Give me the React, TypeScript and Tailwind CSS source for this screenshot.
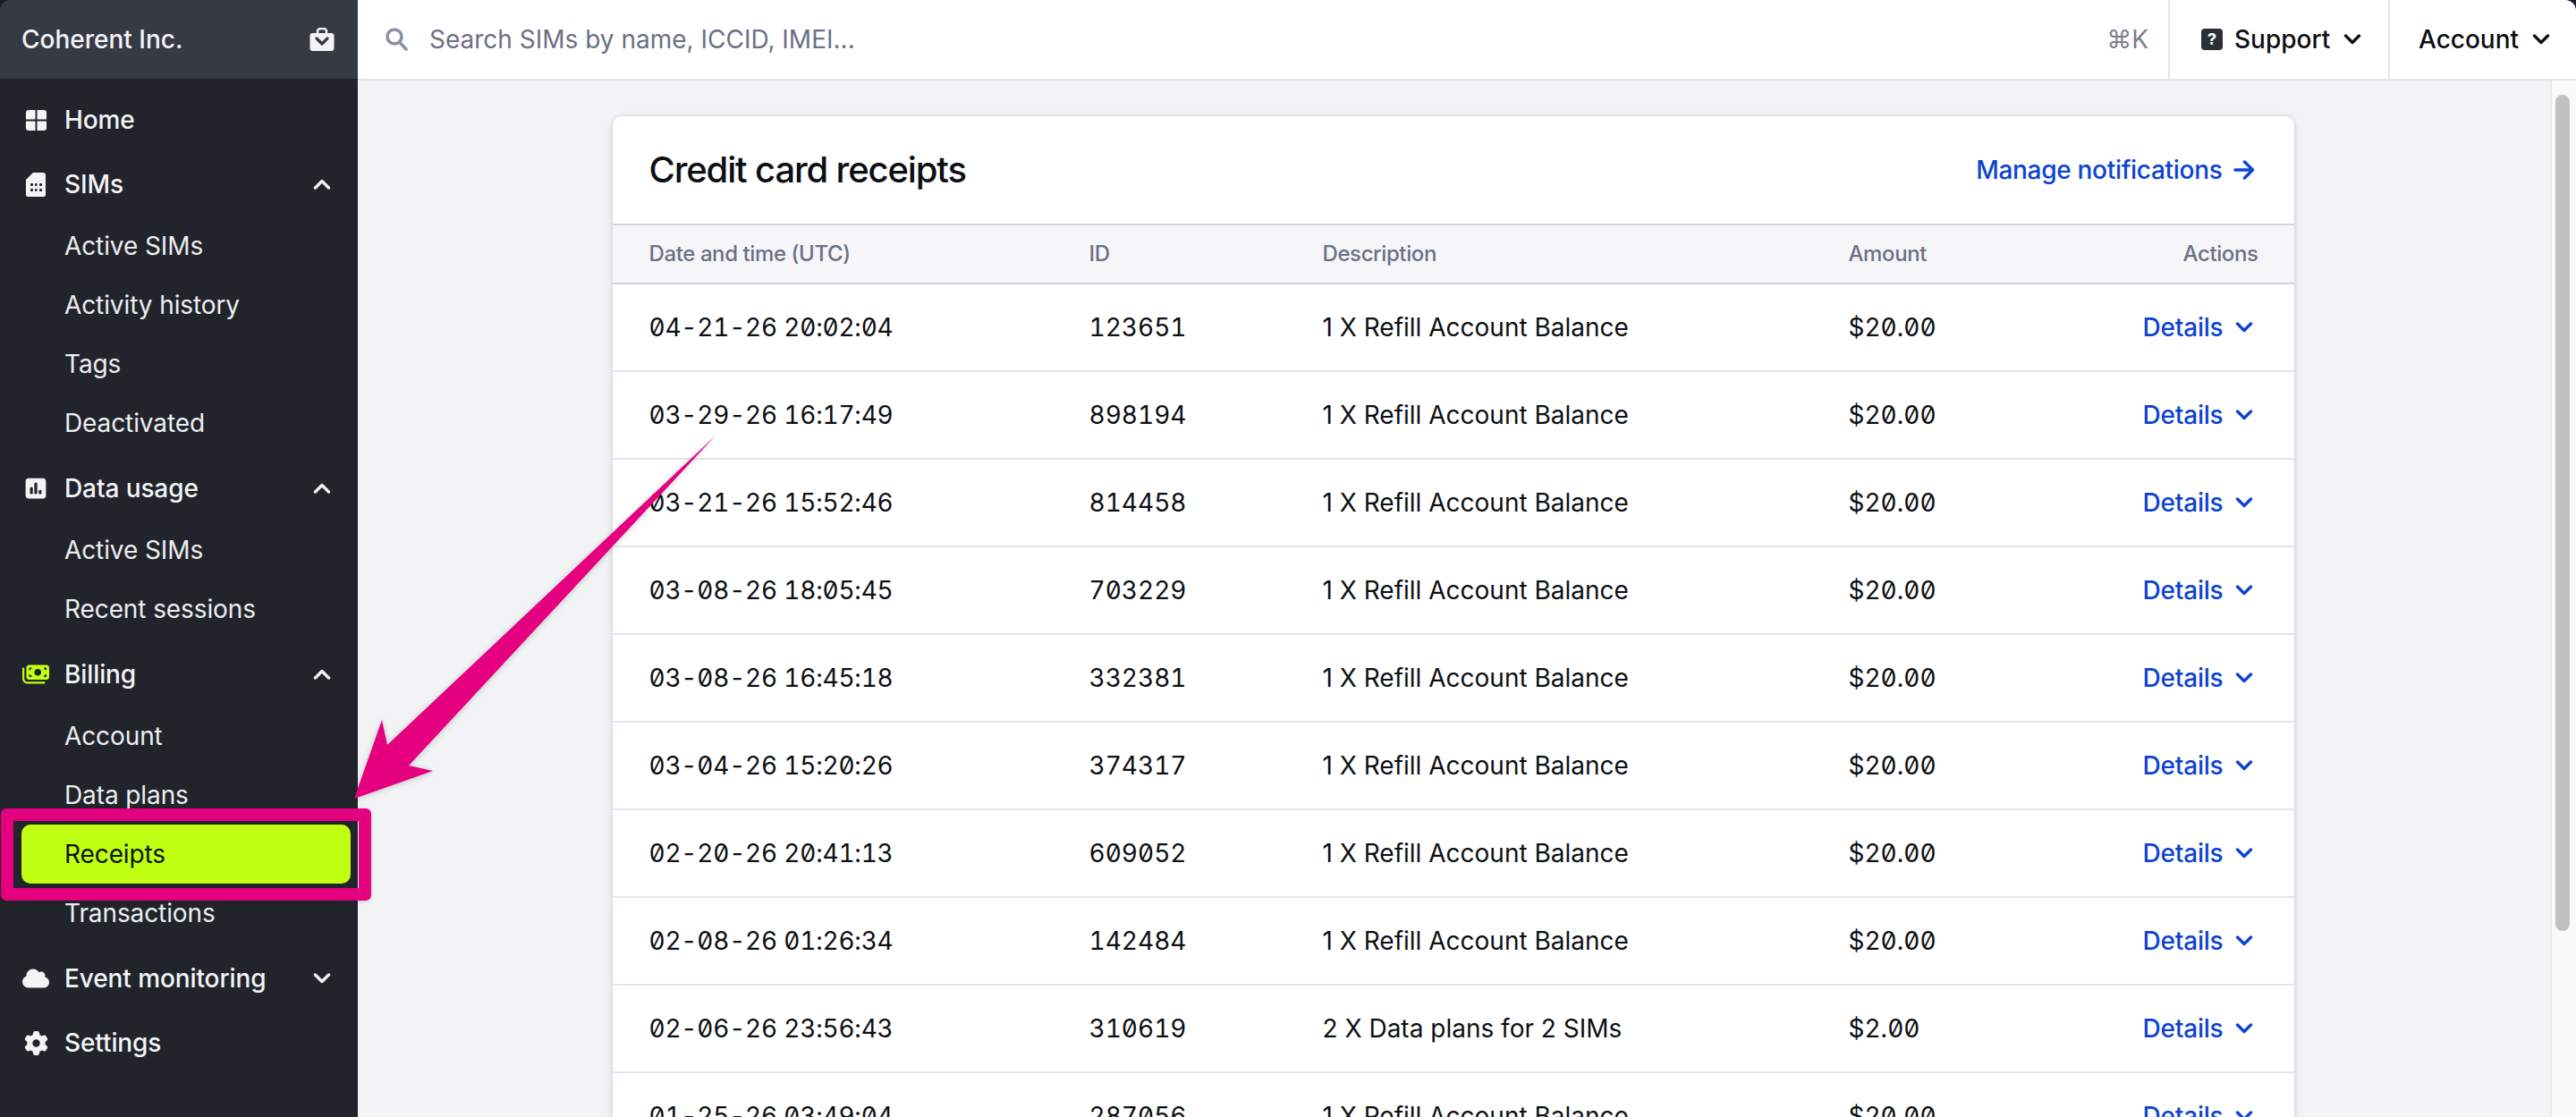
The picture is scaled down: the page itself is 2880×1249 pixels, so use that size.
import React from 'react';
import { FaCloud, FaGear, FaMoneyBills, FaSquarePollVertical } from 'react-icons/fa6';

const receipts = [
  { date: '04-21-26 20:02:04', id: '123651', desc: '1 X Refill Account Balance', amount: '$20.00' },
  { date: '03-29-26 16:17:49', id: '898194', desc: '1 X Refill Account Balance', amount: '$20.00' },
  { date: '03-21-26 15:52:46', id: '814458', desc: '1 X Refill Account Balance', amount: '$20.00' },
  { date: '03-08-26 18:05:45', id: '703229', desc: '1 X Refill Account Balance', amount: '$20.00' },
  { date: '03-08-26 16:45:18', id: '332381', desc: '1 X Refill Account Balance', amount: '$20.00' },
  { date: '03-04-26 15:20:26', id: '374317', desc: '1 X Refill Account Balance', amount: '$20.00' },
  { date: '02-20-26 20:41:13', id: '609052', desc: '1 X Refill Account Balance', amount: '$20.00' },
  { date: '02-08-26 01:26:34', id: '142484', desc: '1 X Refill Account Balance', amount: '$20.00' },
  { date: '02-06-26 23:56:43', id: '310619', desc: '2 X Data plans for 2 SIMs', amount: '$2.00' },
  { date: '01-25-26 03:49:04', id: '287056', desc: '1 X Refill Account Balance', amount: '$20.00' },
];

function Chevron({ up = false, className = '' }: { up?: boolean; className?: string }) {
  return (
    <svg viewBox="0 0 20 12" className={`w-[20px] h-[12px] ${className}`} fill="none" stroke="currentColor" strokeWidth="3.4" strokeLinecap="round" strokeLinejoin="round">
      <polyline points={up ? '2.5,10 10,2.5 17.5,10' : '2.5,2 10,9.5 17.5,2'} />
    </svg>
  );
}

function HomeIcon() {
  return (
    <svg viewBox="0 0 23 23" className="w-[23px] h-[23px]" fill="currentColor">
      <path d="M3 0h7.500v10.500H0V3a3 3 0 0 1 3-3z" />
      <path d="M12.500 0H20a3 3 0 0 1 3 3v7.500H12.500z" />
      <path d="M0 12.500h10.500V23H3a3 3 0 0 1-3-3z" />
      <path d="M12.500 12.500H23V20a3 3 0 0 1-3 3h-7.500z" />
    </svg>
  );
}

function SimIcon() {
  return (
    <svg viewBox="0 0 22 27" className="w-[22px] h-[27px]">
      <path d="M8 0h11a3 3 0 0 1 3 3v21.500a2.500 2.500 0 0 1-2.500 2.500h-17A2.500 2.500 0 0 1 0 24.500V8z" fill="#f3f4f6" />
      <g fill="#22242b">
        <rect x="5" y="12" width="3" height="3" rx="1" />
        <rect x="10" y="12" width="2.500" height="3" rx="1" />
        <rect x="15" y="12" width="3" height="3" rx="1" />
        <rect x="5" y="18" width="3" height="3" rx="1" />
        <rect x="10" y="18" width="2.500" height="3" rx="1" />
        <rect x="15" y="18" width="3" height="3" rx="1" />
      </g>
    </svg>
  );
}

function BagIcon() {
  return (
    <svg viewBox="0 0 28 26" className="w-[28px] h-[26px]">
      <path d="M9 7V4a3 3 0 0 1 3-3h4a3 3 0 0 1 3 3v3" fill="none" stroke="#f3f4f6" strokeWidth="2.500" />
      <rect x="0.500" y="6" width="27" height="20" rx="3" fill="#f3f4f6" />
      <polyline points="8,12 14,18 20,12" fill="none" stroke="#363a45" strokeWidth="3.200" strokeLinecap="round" strokeLinejoin="round" />
    </svg>
  );
}

function NavGroup({ icon, label, open, active }: { icon: React.ReactNode; label: string; open?: boolean; active?: boolean }) {
  return (
    <div className="h-[72px] flex items-center">
      <div className={`w-[72px] flex justify-center pl-[8px] ${active ? 'text-[#bfff12]' : 'text-[#f3f4f6]'}`}>{icon}</div>
      <span className="flex-1 text-[28px] font-medium text-[#f3f4f6] tracking-[-0.1px]">{label}</span>
      {open !== undefined && <Chevron up={open} className="text-[#f3f4f6] mr-[30px]" />}
    </div>
  );
}

function NavItem({ label, active }: { label: string; active?: boolean }) {
  return (
    <div className={`h-[66px] ml-[24px] mr-[8px] pl-[48px] flex items-center rounded-[10px] text-[28px] tracking-[-0.1px] ${active ? 'bg-[#bfff12] text-[#0d120e]' : 'text-[#eceef1]'}`}>
      {label}
    </div>
  );
}

function Sidebar() {
  return (
    <aside className="w-[400px] shrink-0 bg-[#22242b] flex flex-col">
      <div className="h-[88px] bg-[#363a45] flex items-center justify-between pl-[24px] pr-[26px]">
        <span className="text-[28px] font-medium text-[#f3f4f6]">Coherent Inc.</span>
        <BagIcon />
      </div>
      <nav className="pt-[10px] flex flex-col">
        <NavGroup icon={<HomeIcon />} label="Home" />
        <NavGroup icon={<SimIcon />} label="SIMs" open />
        <div className="mb-[4px]">
          <NavItem label="Active SIMs" />
          <NavItem label="Activity history" />
          <NavItem label="Tags" />
          <NavItem label="Deactivated" />
        </div>
        <NavGroup icon={<FaSquarePollVertical className="w-[24px] h-[26px]" />} label="Data usage" open />
        <div className="mb-[4px]">
          <NavItem label="Active SIMs" />
          <NavItem label="Recent sessions" />
        </div>
        <NavGroup icon={<FaMoneyBills className="w-[30px] h-[24px]" />} label="Billing" open active />
        <div className="mb-[4px]">
          <NavItem label="Account" />
          <NavItem label="Data plans" />
          <NavItem label="Receipts" active />
          <NavItem label="Transactions" />
        </div>
        <NavGroup icon={<FaCloud className="w-[30px] h-[24px]" />} label="Event monitoring" open={false} />
        <NavGroup icon={<FaGear className="w-[27px] h-[27px]" />} label="Settings" />
      </nav>
    </aside>
  );
}

function TopBar() {
  return (
    <header className="h-[90px] shrink-0 bg-white border-b-2 border-[#e4e5ea] flex items-stretch">
      <div className="flex-1 flex items-center pl-[31px] pr-[22px]">
        <svg viewBox="0 0 25 26" className="w-[25px] h-[26px] mr-[24px]" fill="none" stroke="#8b92a8" strokeWidth="3.600" strokeLinecap="round">
          <circle cx="10" cy="10" r="8" />
          <line x1="16" y1="16.500" x2="23" y2="24" />
        </svg>
        <span className="flex-1 text-[28px] text-[#6b7085]">Search SIMs by name, ICCID, IMEI...</span>
        <span className="text-[28px] text-[#7a7f8f]">⌘K</span>
      </div>
      <div className="w-[246px] border-l-2 border-[#e4e5ea] flex items-center pl-[35px] text-[#0d0f14]">
        <span className="w-[24px] h-[24px] rounded-[4px] bg-[#2b2f38] text-white text-[18px] leading-[24px] text-center font-bold mr-[13px]">?</span>
        <span className="text-[28px] font-medium mr-[15px]">Support</span>
        <Chevron />
      </div>
      <div className="w-[210px] border-l-2 border-[#e4e5ea] flex items-center pl-[32px] text-[#0d0f14]">
        <span className="text-[28px] font-medium mr-[15px]">Account</span>
        <Chevron />
      </div>
    </header>
  );
}

function ReceiptRow({ date, id, desc, amount }: { date: string; id: string; desc: string; amount: string }) {
  return (
    <div className="h-[98px] border-b-2 border-[#e4e5ea] grid grid-cols-[492px_261px_588px_1fr_auto] items-center pl-[41px] pr-[46px] text-[28px] text-[#0d0f14]">
      <span className="tabular-nums slashed-zero tracking-[-0.22px]">{date}</span>
      <span className="tabular-nums slashed-zero">{id}</span>
      <span>{desc}</span>
      <span className="tabular-nums slashed-zero">{amount}</span>
      <a className="flex items-center gap-[13px] text-[#0d43d1] font-medium tracking-[-0.2px]">
        Details
        <Chevron />
      </a>
    </div>
  );
}

function ReceiptsCard() {
  return (
    <section className="w-[1880px] mx-auto bg-white rounded-t-[10px] shadow-[0_1px_6px_rgba(30,35,60,0.22)]">
      <div className="h-[120px] flex items-center justify-between pl-[41px] pr-[44px]">
        <h1 className="text-[40px] font-medium text-[#0d0f14] tracking-[-1.15px]">Credit card receipts</h1>
        <a className="flex items-center gap-[12px] text-[28px] font-medium text-[#0d43d1] tracking-[-0.3px]">
          Manage notifications
          <svg viewBox="0 0 24 22" className="w-[24px] h-[22px]" fill="none" stroke="currentColor" strokeWidth="3.400" strokeLinecap="round" strokeLinejoin="round">
            <line x1="2" y1="11" x2="21" y2="11" />
            <polyline points="12.500,2 21.500,11 12.500,20" />
          </svg>
        </a>
      </div>
      <div className="h-[68px] bg-[#f6f6f9] border-y-2 border-[#d2d3dd] grid grid-cols-[492px_261px_588px_1fr_auto] items-center pl-[41px] pr-[40px] text-[24px] font-medium text-[#6b7085] tracking-[-0.4px]">
        <span>Date and time (UTC)</span>
        <span>ID</span>
        <span>Description</span>
        <span>Amount</span>
        <span>Actions</span>
      </div>
      {receipts.map((r) => (
        <ReceiptRow key={r.id} {...r} />
      ))}
    </section>
  );
}

export default function App() {
  return (
    <div className="w-[2880px] h-[1249px] bg-[#191a2a] overflow-hidden font-['Inter',sans-serif]">
      <div className="relative w-full h-full rounded-t-[12px] overflow-hidden flex">
        <Sidebar />
        <div className="flex-1 min-w-0 flex flex-col">
          <TopBar />
          <div className="flex-1 min-h-0 flex bg-[#f1f3f5]">
            <main className="flex-1 min-w-0 overflow-hidden pt-[40px] pr-[2px]">
              <ReceiptsCard />
            </main>
            <div className="w-[29px] shrink-0 bg-[#fafafa] border-l-2 border-[#e8e8e8] pl-[4px] pt-[16px]">
              <div className="w-[16px] h-[935px] rounded-full bg-[#c1c1c1]" />
            </div>
          </div>
        </div>

        {/* annotation overlay */}
        <div className="absolute left-[1px] top-[904px] w-[414px] h-[103px] border-[14px] border-[#e4007f] rounded-[6px] shadow-[0_1px_4px_rgba(0,0,0,0.18)]" />
        <svg viewBox="0 0 420 420" className="absolute left-[390px] top-[480px] w-[420px] h-[420px] drop-shadow-[0_1px_3px_rgba(0,0,0,0.2)]">
          <polygon points="410,7 43,353 37,325 6,413 94,382 67,376" fill="#e4007f" />
        </svg>
      </div>
    </div>
  );
}
